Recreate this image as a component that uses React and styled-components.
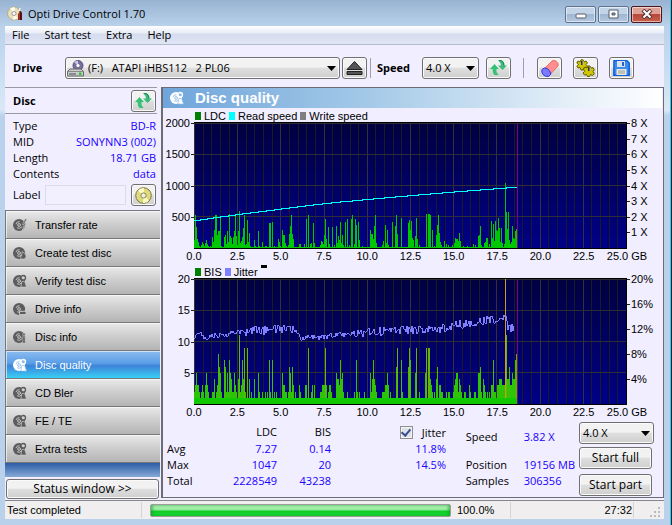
import React from "react";
import styled, { createGlobalStyle, css } from "styled-components";

const Global = createGlobalStyle`
  * { box-sizing: border-box; }
  html, body { margin: 0; }
  body { background: #06222e; font-family: "Open Sans", "Noto Sans", sans-serif; font-size: 11px; line-height: 16px; color: #000; }
  button, input, select { font: inherit; color: inherit; margin: 0; }
  svg { display: block; }
`;

const Window = styled.div`
  min-height: 100vh;
  margin-right: 1px;
  display: flex;
  flex-direction: column;
  padding: 0 6px 6px 5px;
  border-right: 1px solid #22cdee;
  border-bottom: 1px solid #22cdee;
  background: linear-gradient(#98b3d2 0, #b9d1ea 26px, #c9def2 70px, #d9e8f6 110px, #b9d1ea 116px, #b9d1ea 100%);
`;

const TitleBar = styled.header`
  height: 26px;
  display: flex;
  align-items: center;
  gap: 5px;
  padding: 2px 2px 0 2px;
  h1 { flex: 1; margin: 0; font-size: 11px; font-weight: 400; line-height: 16px; }
`;
const WindowButton = styled.button`
  width: 31px;
  height: 17px;
  margin-right: -2px;
  padding: 0;
  display: grid;
  place-items: center;
  border: 1px solid ${(p) => (p.$close ? "#4d1519" : "#5d7390")};
  border-radius: 2px;
  box-shadow: inset 0 0 0 1px #ffffff88;
  background: ${(p) => (p.$close ? "linear-gradient(#dda196 0 45%, #b8483b 50%, #c8604c)" : "linear-gradient(#c3d4e7 0 45%, #9fb7d3 50%, #b5c9df)")};
`;
const WindowButtons = styled.div`
  display: flex;
  gap: 4px;
  margin-right: 2px;
`;

const MenuBar = styled.nav`
  height: 19px;
  display: flex;
  align-items: center;
  gap: 15px;
  padding: 0 7px;
  border-bottom: 1px solid #b3bccd;
  background: linear-gradient(#fff 0, #e8ecf6 7px, #d5dcee 8px, #dfe5f3 100%);
`;
const MenuItem = styled.button`
  border: 0;
  padding: 0;
  background: none;
  font-size: 11px;
  line-height: 16px;
`;

const face = css`
  border: 1px solid #707070;
  border-radius: 3px;
  box-shadow: inset 0 0 0 1px #fafafa;
  background: linear-gradient(#f2f2f2 0 45%, #dedede 52%, #cfcfcf);
`;
const Client = styled.div`
  flex: 1;
  display: flex;
  flex-direction: column;
  background: #f0eeff;
`;
const Toolbar = styled.div`
  height: 42px;
  display: flex;
  align-items: center;
  padding: 4px 8px 0;
`;
const BoldLabel = styled.label`
  font-weight: 700;
  width: ${(p) => p.$w}px;
`;
const IconButton = styled.button`
  ${face}
  width: 25px;
  height: 22px;
  flex: none;
  padding: 0;
  display: grid;
  place-items: center;
  margin-left: ${(p) => p.$gap || 0}px;
`;
const Divider = styled.span`
  width: 1px;
  height: 20px;
  background: #a0a0a0;
  margin: 0 ${(p) => p.$right}px 0 ${(p) => p.$left}px;
`;
const SelectBox = styled.div`
  display: grid;
  grid-template: 22px / 1fr;
  flex: ${(p) => (p.$w ? "none" : "1 1 0")};
  width: ${(p) => (p.$w ? p.$w + "px" : "auto")};
  align-items: center;
  > * { grid-area: 1 / 1; }
  > svg { pointer-events: none; }
  > svg:last-child { justify-self: end; margin-right: 4px; }
  > svg:first-child { justify-self: start; margin-left: 2px; z-index: 1; }
  select {
    ${face}
    appearance: none;
    width: 100%;
    height: 22px;
    padding: 0 16px 0 ${(p) => (p.$icon ? 22 : 3)}px;
    white-space: pre;
  }
`;
const ToolbarEnd = styled.div`
  display: flex;
  margin-right: 22px;
`;

const Main = styled.div`
  flex: 1;
  display: grid;
  grid-template-columns: 155px 1fr;
`;
const Sidebar = styled.aside`
  display: flex;
  flex-direction: column;
`;
const DiscHeader = styled.div`
  height: 27px;
  margin-right: 3px;
  border-top: 1px solid #9a9aa4;
  border-bottom: 1px solid #9a9aa4;
  display: flex;
  align-items: center;
  justify-content: space-between;
  padding: 0 1px 0 8px;
  h2 { margin: 0; font-size: 11px; line-height: 16px; }
`;
const DiscFacts = styled.dl`
  margin: 4px 4px 0 8px;
  display: grid;
  grid-template-columns: auto 1fr;
  line-height: 16px;
  dt, dd { margin: 0; }
  dd { text-align: right; color: #1a00ff; }
`;
const LabelRow = styled.div`
  display: flex;
  align-items: center;
  height: 28px;
  padding: 0 4px 2px 8px;
  justify-content: space-between;
  input {
    width: 81px;
    height: 20px;
    border: 1px solid #dcdce6;
    background: #f2f0ff;
    padding: 0 3px;
  }
`;
const Tests = styled.nav`
  display: flex;
  flex-direction: column;
  border-top: 1px solid #77777b;
`;
const TestButton = styled.button`
  height: 28px;
  display: flex;
  align-items: center;
  gap: 8px;
  padding: 0 7px;
  border: 0;
  border-left: 1px solid #77777b;
  border-bottom: 1px solid #77777b;
  box-shadow: inset 1px 1px 0 #ffffff99;
  font: 11px/16px "Liberation Sans", Arial, sans-serif;
  text-align: left;
  color: ${(p) => (p.$active ? "#fff" : "#000")};
  background: ${(p) => (p.$active
    ? "linear-gradient(#8cbcf0 0, #5b9ee6 45%, #3d83d8 55%, #38d0f5)"
    : "linear-gradient(#e9e9e9, #cdcdcd 50%, #b4b4b4)")};
`;
const SideFill = styled.div`
  flex: 1;
  min-height: 14px;
  background: linear-gradient(#2d5ca6, #86aad6);
`;
const StatusToggle = styled.button`
  ${face}
  height: 20px;
  margin: 2px 1px 1px;
  font-size: 12px;
  line-height: 16px;
  padding: 0;
`;

const Panel = styled.section`
  border: 1px solid #6c6c74;
  border-left: 2px solid #6c6c74;
  margin-bottom: 2px;
  margin-left: 1px;
  display: flex;
  flex-direction: column;
`;
const PanelHeader = styled.div`
  height: 20px;
  margin: 0 1px 1px 0;
  padding-left: 7px;
  display: flex;
  align-items: center;
  gap: 11px;
  color: #fff;
  background: linear-gradient(90deg, #6fa5db, #a5cae8 42%, #dceaf6 76%, #fff);
  h2 { margin: 0; font: bold 15px/18px "Liberation Sans", Arial, sans-serif; }
`;
const Figure = styled.figure`
  margin: 0;
  display: grid;
  grid-template-columns: 31px 1fr 36px;
  grid-template-rows: 13px 127px 16px;
  font: 12px/12px "Liberation Sans", Arial, sans-serif;
`;
const Legend = styled.figcaption`
  grid-column: 2 / 4;
  display: flex;
  align-items: center;
  gap: 3px;
  padding-left: 1px;
  font-size: 11px;
`;
const Swatch = styled.i`
  width: 6px;
  height: 8px;
  background: ${(p) => p.$c};
`;
const Mark = styled.i`
  width: 6px;
  height: 3px;
  align-self: flex-start;
  background: #000;
`;
const Plot = styled.svg`
  grid-row: 2;
  grid-column: 2;
  width: 100%;
  height: 127px;
`;
const Axis = styled.ol`
  grid-row: 2;
  grid-column: ${(p) => (p.$right ? 3 : 1)};
  list-style: none;
  margin: -5px 0 0;
  padding: 0;
  height: 125px;
  display: grid;
  grid-auto-rows: 1fr;
  font-size: 11px;
  li { display: flex; align-items: flex-start; gap: 1px; justify-content: ${(p) => (p.$right ? "flex-start" : "flex-end")}; }
  li::${(p) => (p.$right ? "before" : "after")} { content: ""; width: 3px; height: 1px; margin-top: 6px; background: #222; }
`;
const XAxis = styled.ol`
  grid-row: 3;
  grid-column: 2;
  list-style: none;
  margin: 0 -5%;
  padding: 1px 0 0;
  display: grid;
  grid-template-columns: repeat(11, 1fr);
  font-size: 11px;
  li { text-align: center; white-space: nowrap; }
`;

const Results = styled.div`
  flex: 1;
  display: flex;
  padding: 1px 9px 0 4px;
`;
const ResultTable = styled.table`
  width: 279px;
  table-layout: fixed;
  border-collapse: collapse;
  margin-top: 2px;
  align-self: flex-start;
  th, td { padding: 0; height: 16px; line-height: 16px; font-weight: 400; text-align: right; white-space: nowrap; }
  tbody th { text-align: left; }
  td { color: #1a00ff; }
  label { display: inline-flex; align-items: center; gap: 9px; }
`;
const Tick = styled.input`
  appearance: none;
  width: 13px;
  height: 13px;
  display: grid;
  place-items: center;
  border: 1px solid #8e8f8f;
  background: #dfe2e8;
  box-shadow: inset 0 0 0 1px #f4f4f4;
  &:checked::before {
    content: "";
    width: 4px;
    height: 7px;
    margin-top: -2px;
    border: solid #3c4f92;
    border-width: 0 2px 2px 0;
    transform: rotate(40deg);
  }
`;
const Readout = styled.dl`
  margin: 7px 4px 0 auto;
  display: grid;
  grid-template-columns: 58px auto;
  grid-template-rows: 28px 16px 16px;
  line-height: 16px;
  dt, dd { margin: 0; white-space: nowrap; }
  dd { color: #1a00ff; }
`;
const Actions = styled.div`
  display: flex;
  flex-direction: column;
  gap: 3px;
`;
const ActionButton = styled.button`
  ${face}
  width: 73px;
  height: 22px;
  margin-bottom: ${(p) => (p.$last ? 0 : 2)}px;
  font-size: 12px;
  line-height: 16px;
  padding: 0;
`;

const StatusBar = styled.footer`
  height: 19px;
  display: flex;
  align-items: center;
  border-top: 1px solid #85858a;
  background: #f0eeee;
  font: 11px/16px "Liberation Sans", Arial, sans-serif;
`;
const StatusCell = styled.div`
  height: 16px;
  width: ${(p) => p.$w}px;
  flex: none;
  padding: 0 ${(p) => (p.$end ? 1 : 4)}px 0 ${(p) => p.$pad || 5}px;
  border-right: ${(p) => (p.$plain ? "0" : "1px solid #d4d4d4")};
  text-align: ${(p) => (p.$end ? "right" : "left")};
  white-space: nowrap;
`;
const ProgressTrack = styled.div`
  flex: 1;
  height: 13px;
  margin: 0 1px 0 8px;
  border: 1px solid #9c9c9c;
  border-radius: 2px;
  background: #e6e6e6;
`;
const ProgressFill = styled.div`
  height: 100%;
  background: linear-gradient(#c2f7c6 0, #8ee996 45%, #10cc28 55%, #1ddf3a);
  box-shadow: inset 2px 0 3px #0a9a1c88, inset -2px 0 3px #0a9a1c88;
`;

/* icons */
const Arrow = () => <svg width="9" height="5" viewBox="0 0 9 5"><path d="M0 0h9L4.500 5z" fill="#000" /></svg>;
const Refresh = () => (
  <svg width="17" height="16" viewBox="0 0 17 16">
    <path d="M0 9 4.500 4 9 9H6.500v3l2 3H4.500Q2.500 13 2.500 9z" fill="#36c274" />
    <path d="M8 0h3q3.500 1 3.500 5.500H17L12.500 10 8 5.500h3Q11 3 8 0z" fill="#3dbb7c" />
    <path d="M9 .5h2q3 1 3 5" fill="none" stroke="#1d8a58" />
  </svg>
);
const Eject = () => (
  <svg width="17" height="14" viewBox="0 0 17 14">
    <path d="M8.500.5 16 8.500H1z" fill="#555" stroke="#222" /><path d="M1 10.500h15v3H1z" fill="#555" stroke="#222" />
  </svg>
);
const DriveIcon = () => (
  <svg width="17" height="17" viewBox="0 0 17 17">
    <circle cx="11" cy="5.500" r="5" fill="#76709c" stroke="#554e7a" /><path d="M11 5.500 7 2l4-1.500z" fill="#d0c8e8" />
    <circle cx="11" cy="5.500" r="1.600" fill="#fff" />
    <path d="M3 9h11l2.500 2.500V16H.5v-4.500z" fill="#c9cccf" stroke="#686868" /><path d="M1 11.500h15" stroke="#8a8a8a" />
    <path d="M2 13h7v2H2z" fill="#8b8b8b" /><path d="M12 12.500h2.500V15H12z" fill="#2cc82c" />
  </svg>
);
const Eraser = () => (
  <svg width="19" height="19" viewBox="0 0 19 19">
    <path d="M5 9 12 2q2-1.500 4.500.5T18 7l-7.500 8z" fill="#ff8f8f" stroke="#f06a6a" />
    <path d="M2 10.500Q4 8 7 9.500t4 5.500l-2.500 2.500Q5 18 3 15.500T2 10.500z" fill="#7a7aff" stroke="#3434d8" />
  </svg>
);
const Gears = () => (
  <svg width="19" height="18" viewBox="0 0 19 18">
    <g fill="#cfc500" stroke="#625e00">
      <path d="M2 2 4 3 5 .8h2L8 3l2-1 1.500 2L10 5.500l1.500 1.500-1.500 2-2-.5L7 11H5L4 8.500 2 9 .8 7 2.500 5.500.8 4z" />
      <path d="m9 8 2 1 1-2h2l1 2 2-.5L18.300 11 17 12.500l1.300 2-1.800 2-2-1-1 2h-2l-1-2-2 .5L7 14l1.500-1.500L7.500 10z" />
    </g>
    <path d="M6 2v4M13 8v4" stroke="#333" strokeWidth="2" /><path d="M7 2v4M14 8v4" stroke="#bbb" />
  </svg>
);
const Save = () => (
  <svg width="17" height="16" viewBox="0 0 17 16">
    <path d="M1 .8h13l2.200 2.200v12.200H.8z" fill="#3b8cf0" stroke="#1260d8" strokeWidth="1.500" />
    <path d="M4 1h8v6H4z" fill="#dde2e8" /><path d="M9 2h2v4H9z" fill="#2264cc" />
    <path d="M3.500 9h10v6h-10z" fill="#e8e8dc" /><path d="M5 11h7M5 13h7" stroke="#999" />
  </svg>
);
const GoldDisc = () => (
  <svg width="17" height="17" viewBox="0 0 17 17">
    <circle cx="8.500" cy="8.500" r="7.800" fill="#ddda80" stroke="#77753c" />
    <path d="M8.500 8.500 3 3.500Q5 1 9 1zM8.500 8.500 14 13.500Q12 16 8 16z" fill="#fffcc8" />
    <circle cx="8.500" cy="8.500" r="2.600" fill="#eee" stroke="#8c8940" />
  </svg>
);
const AppIcon = () => (
  <svg width="16" height="16" viewBox="0 0 16 16">
    <circle cx="7" cy="7.500" r="6.500" fill="#e9dfb8" stroke="#b8ac8a" /><path d="M7 7.500 3 2l5-1zM7 7.500l4 5-5 1.500z" fill="#fffdf0" />
    <circle cx="7" cy="7.500" r="2" fill="#fff" stroke="#999" />
    <path d="M11 8l1.500-2v8H11z" fill="#c41818" /><path d="M12.500 4 15 6.500V14h-2.500z" fill="#4a1414" /><path d="M12 2h1.500v3H12z" fill="#eee" />
  </svg>
);
const badges = {
  bolt: <path d="m13 1-3 6h2l-2 6 4-7h-2l3-5z" fill="currentColor" stroke="var(--gap)" strokeWidth=".6" />,
  flame: <path d="M10 6q4 2 4 5t-3 3q-4 0-3-4l1 1z" fill="currentColor" stroke="var(--gap)" strokeWidth=".7" />,
  lens: <g><circle cx="11" cy="4" r="2.400" fill="var(--gap)" stroke="currentColor" strokeWidth="1.400" /><path d="M9.500 8h3l2 6H8.500z" fill="currentColor" stroke="var(--gap)" strokeWidth=".7" /></g>,
  drive: <path d="M7 10h7v3.500H7z" fill="currentColor" stroke="var(--gap)" />,
  info: <path d="M10.500 3.500h2.500V6h-2.500zM9.500 7.500H13V13h1v1H9.500v-1h1V9h-1z" fill="currentColor" stroke="var(--gap)" strokeWidth=".6" />,
};
const DiscSvg = styled.svg`
  color: ${(p) => (p.$light ? "#fff" : "#5c5c5c")};
  --gap: ${(p) => (p.$light ? "#8fbcea" : "#cfcfcf")};
  flex: none;
`;
const DiscIcon = ({ badge, light }) => (
  <DiscSvg $light={light} width="14" height="14" viewBox="0 0 15 15">
    <circle cx="6.500" cy="7.500" r="6.500" fill="currentColor" />
    <path d="M3.200 6.500A3.500 3.500 0 0 1 7 4M4.500 10.500Q7 12 9.500 9.500" fill="none" stroke="var(--gap)" />
    <circle cx="6.500" cy="7.500" r="1.500" fill="currentColor" stroke="var(--gap)" />
    {badges[badge]}
  </DiscSvg>
);

/* chart data: position, value */
const parse = (s) => s.trim().split(/\s+/).map((p) => p.split(":").map(Number));
const ldc = parse(`0:8 1:33 2:21 3:9 4:6 5:2 7:3 8:6 9:4 10:2 11:5 12:8 13:4 14:2 16:2 18:11 19:6 20:18 21:33 22:33 23:13 24:17 25:17 26:32 27:2
30:11 31:13 32:4 33:17 34:6 35:34 36:12 37:10 38:4 39:11 40:17 41:33 42:12 43:3 44:17 45:37 46:5 47:7 48:11 49:20 50:33 51:3 52:4 53:28 54:6 55:15 56:2
60:8 61:2 64:17 65:2 68:6 71:2 72:2 75:25 76:25 78:26 80:2 84:9 85:6 86:2 88:18 89:13 90:13 91:5 92:2 94:3 95:14 96:22 97:33 98:14 99:9
105:4 106:4 110:4 112:29 114:33 116:4 117:5 119:25 120:5 126:3 127:7 128:6 129:4 130:13 131:29 132:9 134:21 135:4 138:21 140:3 142:22 143:5 144:12 145:8 146:26 147:5 148:13 149:3
151:26 153:29 155:3 157:29 158:33 160:4 161:29 162:23 164:26 165:8 168:2 176:18 177:14 178:14 179:9 180:22 181:33 182:5 188:3 189:7 191:23 192:5 193:18 194:3 198:26 202:33 201:22 203:14
207:30 214:25 215:28 216:18 217:27 218:10 219:8 221:12 222:30 223:9 225:3 232:34 234:34 235:34 236:33 238:18 240:2 242:13 243:23 244:33 245:15 246:6 247:3 250:7 252:4 254:3 258:3 260:5 261:10 262:9 263:9 264:7 265:15 266:7 269:2 273:2
279:4 281:3 284:12 285:13 286:22 287:3 290:5 291:6 292:10 293:10 295:4 297:27 298:10 299:24 300:7 301:27 302:18 303:17 304:30 305:20 306:6 307:20 308:5 310:4 311:65 312:36 313:19 314:36 315:8 316:4 317:6 318:22 319:10 320:9 321:17 322:19 323:18`);
const bis = parse(`0:2 1:3 2:5 3:3 4:3 5:2 7:2 8:3 9:2 11:3 12:5 13:3 14:2 18:2 19:2 20:4 22:2 23:3 24:8 25:6 26:5 27:2 30:7 31:6 32:2 33:5 34:2 35:7 36:5 37:4 38:2 39:2 40:5 41:3 42:2 44:4 45:11 46:2 47:3 48:7 49:4 50:9 51:2 53:9 55:4 57:2 60:4 64:5 65:2 68:2 71:2 73:2 75:7 76:2 78:7 80:2 82:2
88:5 89:3 90:3 91:2 92:2 94:2 95:6 96:5 97:2 98:6 99:3 101:2 105:3 106:2 111:3 112:3 114:9 117:2 118:3 120:3 126:2 127:2 128:3 129:3 130:3 131:9 132:3 134:2 135:3 136:3 137:2 142:5 143:4 144:4 145:3 146:7 147:4 148:5 149:2 153:2 160:2 162:7 163:2 165:2 170:2
176:5 177:2 178:4 179:7 180:4 181:3 182:2 188:2 189:2 190:2 191:3 192:3 193:5 194:3 196:2 202:6 203:9 207:7 208:2 214:6 215:9 216:7 221:5 222:9 225:2 231:5 232:9 234:9 235:9 236:4 237:3 238:2 240:2 242:4 243:6 245:3 246:3 247:2 248:2 252:2 254:2 255:2 259:2 260:3 261:4 262:5 263:5 264:2 265:4 266:3 267:2 270:2 271:2 275:3 276:2 280:2 281:2 284:5 285:5 286:6 287:2 289:4 290:3 291:2 293:2 295:2 297:3 298:3 299:7 300:2 301:2 303:3 304:3 305:4 306:4 307:4 308:3 309:3 310:3 311:20 312:11 313:4 314:4 315:6 316:3 317:3 318:5 319:4 320:4 321:7 322:8 323:7`);
const speed = parse(`0:98 6:97 13:96 19:95 26:94 34:93 41:92 48:91 56:90 64:89 72:88 80:87 87:86 95:85 103:84 111:83 119:82 128:81 137:80 146:79 158:78 168:77 179:76 190:75 201:74 213:73 224:72 236:71 248:70 260:69 273:68 286:67 299:66 312:65 323:65`);
const jitterMean = parse(`0:61 3:54 9:55 11:60 17:57 27:56 31:57 42:53 52:53 58:51 70:51 80:50 95:50 102:53 105:53 107:59 120:58 128:58 140:56 165:54 180:53 212:51 246:50 262:46 279:44 290:41 310:39 312:38 314:50 320:49`);
const jitter = (() => {
  const pts = [];
  let k = 0;
  let seed = 20477;
  for (let x = 0; x <= 320; x++) {
    while (k < jitterMean.length - 2 && jitterMean[k + 1][0] < x) k++;
    const [x0, y0] = jitterMean[k];
    const [x1, y1] = jitterMean[k + 1];
    const spread = x < 48 ? 5 : x < 102 ? 10 : x < 165 ? 6 : 9;
    seed = (seed * 16807) % 2147483647;
    const wobble = (seed / 2147483647 - 0.5) * spread;
    pts.push(`${x},${Math.round(y0 + ((y1 - y0) * (x - x0)) / (x1 - x0) + wobble) + 1}`);
  }
  return pts.join(" ");
})();
const speedPath = speed.map(([x, y], i) => (i ? `H${x}V${y}` : `M${x} ${y}`)).join("");

const bars = (data, unit, color, base) =>
  data.map(([x, v]) => <rect key={x} x={x} y={126 - v * unit} width="1" height={v * unit - base} fill={color(v)} />);

function Chart({ id, children }) {
  const cols = Array.from({ length: 51 }, (_, i) => i);
  return (
    <Plot viewBox="0 0 433 127" preserveAspectRatio="none" shapeRendering="crispEdges" role="img">
      <defs>
        <linearGradient id={id} x1="0" y1="0" x2="0" y2="1"><stop offset="0" stopColor="#000040" /><stop offset="1" stopColor="#000088" /></linearGradient>
      </defs>
      <rect width="433" height="127" fill={`url(#${id})`} />
      {cols.map((i) => <rect key={i} x={Math.round(i * 8.64)} y="1" width="1" height="125" fill={i % 5 ? "#1b1b26" : "#343438"} />)}
      {[1, 32, 63, 94].map((y) => <rect key={y} y={y} width="433" height="1" fill="#2d2d34" />)}
      {children}
      <rect x="323" y="1" width="1" height="125" fill="#800080" />
      <path d="M0 .5H433M0 126.500H433M432 0V127" stroke="#000" strokeWidth="1" fill="none" />
    </Plot>
  );
}
const XLabels = () => (
  <XAxis>
    {["0.0", "2.5", "5.0", "7.5", "10.0", "12.5", "15.0", "17.5", "20.0", "22.5", "25.0 GB"].map((t) => <li key={t}>{t}</li>)}
  </XAxis>
);

const tests = [
  ["Transfer rate", "bolt"], ["Create test disc", "flame"], ["Verify test disc", "lens"], ["Drive info", "drive"], ["Disc info", "info"],
  ["Disc quality", "lens"], ["CD Bler", "lens"], ["FE / TE", "lens"], ["Extra tests", "lens"],
];

export default function App() {
  return (
    <>
      <Global />
      <Window>
        <TitleBar>
          <AppIcon />
          <h1>Opti Drive Control 1.70</h1>
          <WindowButtons>
            <WindowButton aria-label="Minimize"><svg width="12" height="10"><rect x="1" y="5" width="10" height="4" rx="1" fill="#fff" stroke="#555d6b" /></svg></WindowButton>
            <WindowButton aria-label="Maximize"><svg width="11" height="10"><path d="M1 1h9v8H1z" fill="#fff" stroke="#555d6b" /><path d="M4 4h3v2H4z" fill="#8ea5c0" stroke="#555d6b" /></svg></WindowButton>
            <WindowButton $close aria-label="Close"><svg width="12" height="10"><path d="m2 1 8 8m0-8-8 8" stroke="#543034" strokeWidth="4" /><path d="m2.500 1.500 7 7m0-7-7 7" stroke="#fff" strokeWidth="2" /></svg></WindowButton>
          </WindowButtons>
        </TitleBar>
        <MenuBar>
          {["File", "Start test", "Extra", "Help"].map((t) => <MenuItem key={t}>{t}</MenuItem>)}
        </MenuBar>
        <Client>
          <Toolbar>
            <BoldLabel htmlFor="drive" $w={52}>Drive</BoldLabel>
            <SelectBox $icon>
              <DriveIcon />
              <select id="drive"><option>{"(F:)\u00a0\u00a0\u00a0ATAPI iHBS112\u00a0\u00a0\u00a02 PL06"}</option></select>
              <Arrow />
            </SelectBox>
            <IconButton $gap={2} aria-label="Eject"><Eject /></IconButton>
            <Divider $left={3} $right={6} />
            <BoldLabel htmlFor="speed" $w={45}>Speed</BoldLabel>
            <SelectBox $w={57}><select id="speed"><option>4.0 X</option></select><Arrow /></SelectBox>
            <IconButton $gap={7} aria-label="Refresh"><Refresh /></IconButton>
            <Divider $left={12} $right={13} />
            <ToolbarEnd>
              <IconButton aria-label="Erase"><Eraser /></IconButton>
              <IconButton $gap={11} aria-label="Settings"><Gears /></IconButton>
              <IconButton $gap={11} aria-label="Save"><Save /></IconButton>
            </ToolbarEnd>
          </Toolbar>
          <Main>
            <Sidebar>
              <DiscHeader><h2>Disc</h2><IconButton aria-label="Reload disc"><Refresh /></IconButton></DiscHeader>
              <DiscFacts>
                <dt>Type</dt><dd>BD-R</dd>
                <dt>MID</dt><dd>SONYNN3 (002)</dd>
                <dt>Length</dt><dd>18.71 GB</dd>
                <dt>Contents</dt><dd>data</dd>
              </DiscFacts>
              <LabelRow>
                <label htmlFor="label">Label</label>
                <input id="label" />
                <IconButton aria-label="Disc label"><GoldDisc /></IconButton>
              </LabelRow>
              <Tests>
                {tests.map(([name, badge]) => {
                  const active = name === "Disc quality";
                  return <TestButton key={name} $active={active}><DiscIcon badge={badge} light={active} />{name}</TestButton>;
                })}
              </Tests>
              <SideFill />
              <StatusToggle>Status window &gt;&gt;</StatusToggle>
            </Sidebar>
            <Panel>
              <PanelHeader><DiscIcon badge="lens" light /><h2>Disc quality</h2></PanelHeader>
              <Figure>
                <Legend><Swatch $c="#008000" />LDC <Swatch $c="#00ffff" />Read speed <Swatch $c="#808080" />Write speed</Legend>
                <Axis>{["2000", "1500", "1000", "500"].map((t) => <li key={t}>{t}</li>)}</Axis>
                <Chart id="ldc-bg">
                  <rect y="125" width="323" height="1" fill="#00c800" />
                  {bars(ldc, 1, () => "#00c800", 0)}
                  <path d={speedPath} fill="none" stroke="#00ffff" />
                </Chart>
                <Axis $right>{[8, 7, 6, 5, 4, 3, 2, 1].map((n) => <li key={n}>{n} X</li>)}</Axis>
                <XLabels />
              </Figure>
              <Figure>
                <Legend><Swatch $c="#008000" />BIS <Swatch $c="#8080ff" />Jitter <Mark /></Legend>
                <Axis>{["20", "15", "10", "5"].map((t) => <li key={t}>{t}</li>)}</Axis>
                <Chart id="bis-bg">
                  <rect y="120" width="324" height="6" fill="#10c800" />
                  {bars(bis, 6.25, (v) => (v > 15 ? "#c8a018" : v > 8 ? "#68b40c" : v > 5 ? "#44bc08" : "#2cc404"), 6)}
                  <polyline points={jitter} fill="none" stroke="#8080ff" />
                </Chart>
                <Axis $right>{["20%", "16%", "12%", "8%", "4%"].map((n) => <li key={n}>{n}</li>)}</Axis>
                <XLabels />
              </Figure>
              <Results>
                <ResultTable>
                  <colgroup><col width="45" /><col width="65" /><col width="54" /><col width="115" /></colgroup>
                  <thead>
                    <tr><td /><th>LDC</th><th>BIS</th><th><label><Tick type="checkbox" defaultChecked />Jitter</label></th></tr>
                  </thead>
                  <tbody>
                    <tr><th>Avg</th><td>7.27</td><td>0.14</td><td>11.8%</td></tr>
                    <tr><th>Max</th><td>1047</td><td>20</td><td>14.5%</td></tr>
                    <tr><th>Total</th><td>2228549</td><td>43238</td><td /></tr>
                  </tbody>
                </ResultTable>
                <Readout>
                  <dt>Speed</dt><dd>3.82 X</dd>
                  <dt>Position</dt><dd>19156 MB</dd>
                  <dt>Samples</dt><dd>306356</dd>
                </Readout>
                <Actions>
                  <SelectBox $w={75}><select aria-label="Test speed"><option>4.0 X</option></select><Arrow /></SelectBox>
                  <ActionButton>Start full</ActionButton>
                  <ActionButton $last>Start part</ActionButton>
                </Actions>
              </Results>
            </Panel>
          </Main>
        </Client>
        <StatusBar>
          <StatusCell $w={137} $pad={2}>Test completed</StatusCell>
          <ProgressTrack role="progressbar" aria-valuenow={100}><ProgressFill style={{ width: "100%" }} /></ProgressTrack>
          <StatusCell $w={59}>100.0%</StatusCell>
          <StatusCell $w={123} $end>27:32</StatusCell>
          <StatusCell $w={30} $plain>
            <svg width="24" height="16"><path d="M19 5h2v2h-2zM15 9h2v2h-2zM19 9h2v2h-2zM11 13h2v2h-2zM15 13h2v2h-2zM19 13h2v2h-2z" fill="#bbb" /></svg>
          </StatusCell>
        </StatusBar>
      </Window>
    </>
  );
}
